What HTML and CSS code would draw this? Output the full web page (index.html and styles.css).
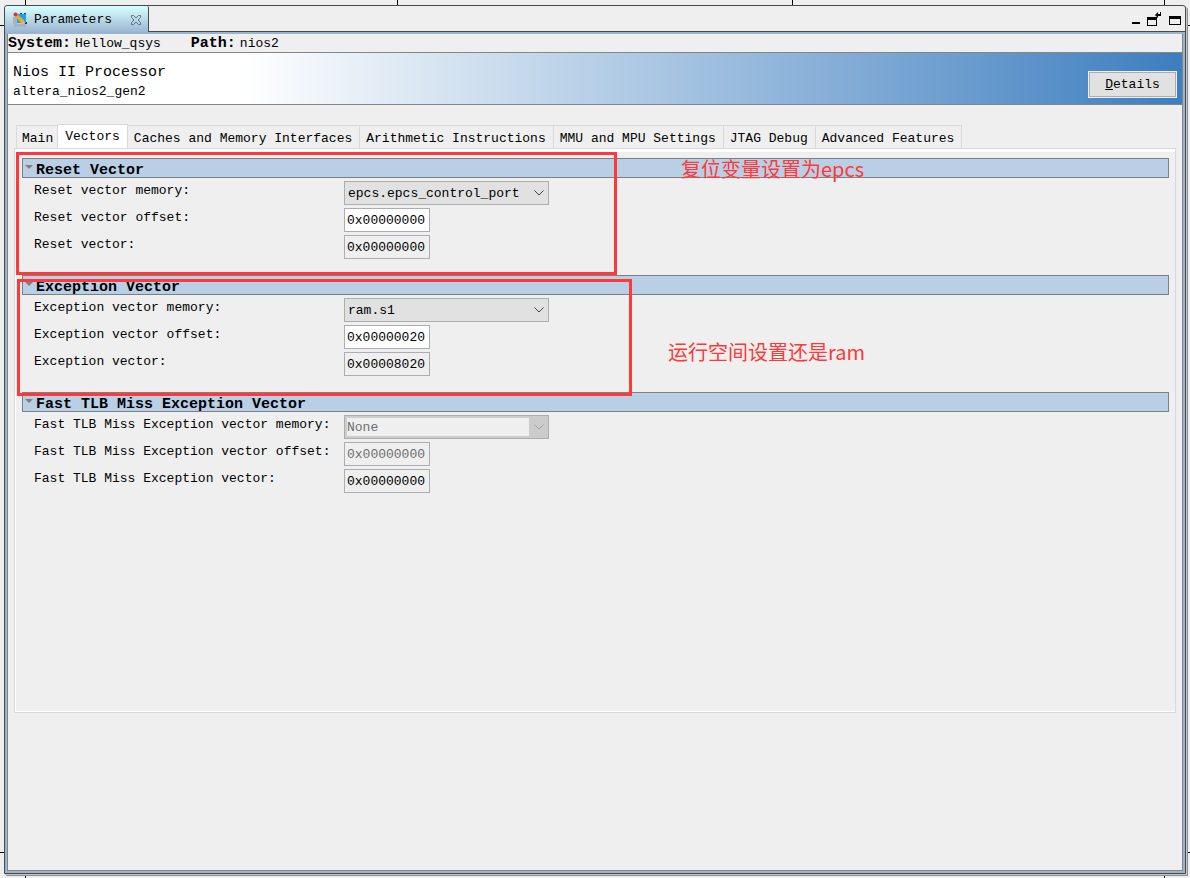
FILE: index.html
```html
<!DOCTYPE html>
<html lang="en">
<head>
<meta charset="utf-8">
<title>Parameters</title>
<link rel="stylesheet" href="styles.css">
</head>
<body>
<div class="desktop">
  <span class="tick tick-v tick-a"></span><span class="tick tick-v tick-b"></span><span class="tick tick-v tick-c"></span><span class="tick tick-v tick-d"></span>
  <span class="tick tick-v tick-e"></span><span class="tick tick-v tick-f"></span>
  <span class="tick tick-h tick-g"></span><span class="tick tick-h tick-i"></span><span class="tick tick-h tick-j"></span><span class="tick tick-h tick-k"></span>
  <main class="window">
    <header class="titlebar">
      <div class="title-tab">
        <svg class="icon-app" width="16" height="16" viewBox="0 0 16 16" aria-hidden="true"><path fill="#a9b3ba" d="M2 12h12v3H2zM1 5h4v7H1z"/><path fill="#12a5f4" d="M5 2h9v9H5z"/><path fill="#1f3550" d="M8 1h2v1H8zM12 1h2v1h-2zM14 10h1v2h-3v-1h2z"/><path fill="#f5a623" d="M3 4l2-2 7 6 1 4-4-1z"/><path fill="#e8b98a" d="M9 11l3-2 1 3z"/><circle cx="3.500" cy="2.500" r="2" fill="#ee2b3a"/></svg>
        <span class="title-text">Parameters</span>
        <button class="icon-btn" type="button" aria-label="Close Parameters"><svg width="12" height="12" viewBox="0 0 12 12"><path fill="none" stroke="#5f7378" d="M1.5 1.5h2l2.500 2.500 2.500-2.500h2v2L8 6l2.500 2.500v2h-2L6 8l-2.500 2.500h-2v-2L4 6 1.500 3.500z"/></svg></button>
      </div>
      <div class="window-buttons">
        <button class="icon-btn" type="button" aria-label="Minimize"><svg width="8" height="15" viewBox="0 0 8 15"><path d="M0 10h8v2H0z"/></svg></button>
        <button class="icon-btn" type="button" aria-label="Restore"><svg width="15" height="15" viewBox="0 0 15 15"><path fill-rule="evenodd" d="M0 5h10v9H0zM1 8v5h8V8z"/><path d="M8 3l3-3v2h2V0h1v4h-3v2z"/></svg></button>
        <button class="icon-btn" type="button" aria-label="Maximize"><svg width="12" height="15" viewBox="0 0 12 15"><path fill-rule="evenodd" d="M0 4h12v9H0zM1 7v5h10V7z"/></svg></button>
      </div>
    </header>
    <div class="frame">
      <div class="content">
        <div class="location"><b>System:</b><span class="system">Hellow_qsys</span><b>Path:</b><span>nios2</span></div>
        <div class="banner">
          <div><h1 class="name">Nios II Processor</h1><div class="kind">altera_nios2_gen2</div></div>
          <button class="details" type="button"><u>D</u>etails</button>
        </div>
        <div class="workspace">
          <div class="tabs" role="tablist">
            <button class="tab" role="tab" type="button">Main</button><button class="tab tab-active" role="tab" type="button" aria-selected="true">Vectors</button><button class="tab" role="tab" type="button">Caches and Memory Interfaces</button><button class="tab" role="tab" type="button">Arithmetic Instructions</button><button class="tab" role="tab" type="button">MMU and MPU Settings</button><button class="tab" role="tab" type="button">JTAG Debug</button><button class="tab" role="tab" type="button">Advanced Features</button>
          </div>
          <div class="pane" role="tabpanel">
            <section class="group">
              <h2 class="bar">Reset Vector</h2>
              <div class="row"><label for="rm">Reset vector memory:</label><span class="combo"><select id="rm"><option>epcs.epcs_control_port</option></select><svg class="chevron" width="10" height="6" viewBox="0 0 10 6"><path d="M.5.500 5 5 9.500.500"/></svg></span></div>
              <div class="row"><label for="ro">Reset vector offset:</label><input id="ro" value="0x00000000"></div>
              <div class="row"><label for="rv">Reset vector:</label><input id="rv" value="0x00000000" readonly></div>
            </section>
            <section class="group">
              <h2 class="bar">Exception Vector</h2>
              <div class="row"><label for="em">Exception vector memory:</label><span class="combo"><select id="em"><option>ram.s1</option></select><svg class="chevron" width="10" height="6" viewBox="0 0 10 6"><path d="M.5.500 5 5 9.500.500"/></svg></span></div>
              <div class="row"><label for="eo">Exception vector offset:</label><input id="eo" value="0x00000020"></div>
              <div class="row"><label for="ev">Exception vector:</label><input id="ev" value="0x00008020" readonly></div>
            </section>
            <section class="group">
              <h2 class="bar">Fast TLB Miss Exception Vector</h2>
              <div class="row"><label for="fm">Fast TLB Miss Exception vector memory:</label><span class="combo combo-off"><select id="fm" disabled><option>None</option></select><svg class="chevron" width="10" height="6" viewBox="0 0 10 6"><path d="M.5.500 5 5 9.500.500"/></svg></span></div>
              <div class="row"><label for="fo">Fast TLB Miss Exception vector offset:</label><input id="fo" value="0x00000000" disabled></div>
              <div class="row"><label for="fv">Fast TLB Miss Exception vector:</label><input id="fv" value="0x00000000" readonly></div>
            </section>
            <div class="mark mark-reset"></div>
            <div class="mark mark-exception"></div>
            <div class="note note-reset" lang="zh">复位变量设置为epcs</div>
            <div class="note note-exception" lang="zh">运行空间设置还是ram</div>
          </div>
        </div>
      </div>
    </div>
  </main>
</div>
</body>
</html>
```
FILE: styles.css
```css
* { box-sizing: border-box; }
body { margin: 0; background: #efefef; color: #000; font: 13px/16px "Liberation Mono", monospace; }
button, input, select { font: inherit; color: inherit; margin: 0; border-radius: 0; }
h1, h2 { margin: 0; font-size: 15px; }

.desktop { position: relative; display: flex; min-height: 100vh; padding: 5px 4px 4px; }
.tick { position: absolute; background: #000; }
.tick-v { width: 1px; height: 5px; }
.tick-h { width: 5px; height: 1px; }
.tick-a, .tick-b, .tick-c, .tick-d { top: 0; }
.tick-a, .tick-e { left: 25px; }
.tick-b { left: 397px; }
.tick-c { left: 792px; }
.tick-d, .tick-f { right: 25px; }
.tick-e, .tick-f { bottom: 0; }
.tick-g, .tick-j { left: 0; }
.tick-i, .tick-k { right: 0; }
.tick-g, .tick-i { top: 25px; }
.tick-j, .tick-k { bottom: 25px; }

/* Window shell */
.window { position: relative; flex: 1; display: flex; flex-direction: column; border: 1px solid #47494b; border-radius: 3px 3px 0 0; box-shadow: 1px 1px #c6c6c0, 2px 2px #8f8f8b; background: #efefef; }
.titlebar { display: flex; justify-content: space-between; height: 26px; border-bottom: 1px solid #47494b; }
.title-tab { display: flex; align-items: center; width: 144px; height: 27px; padding: 0 6px 0 7px; border-right: 1px solid #47494b; background: linear-gradient(#d8ffff, #99b4d1); border-radius: 3px 2px 0 0; }
.title-text { flex: 1; padding-left: 6px; }
.icon-btn { display: flex; padding: 0; border: 0; background: none; }
.window-buttons { display: flex; align-items: center; gap: 7px; padding: 1px 4px 0 0; }
.frame { flex: 1; display: flex; padding: 2px; background: #99b4d1; }
.content { flex: 1; display: flex; flex-direction: column; border: 1px solid #858585; border-top: 0; background: #efefef; }

.location { display: flex; align-items: center; gap: 4px; height: 19px; padding-top: 2px; border-bottom: 1px solid #858585; }
.location b { font-size: 15px; }
.system { margin-right: 26px; }
.banner { display: flex; align-items: center; justify-content: space-between; min-height: 52px; padding: 6px 5px 0; border-bottom: 1px solid #858585; background: linear-gradient(to right, #fff 20%, #3d7ebf); }
.name { font-weight: 400; line-height: 20px; }
.kind { line-height: 18px; }
.details { width: 89px; height: 27px; margin-top: 6px; padding: 0; border: 1px solid #efefef; outline: 1px solid #adadad; outline-offset: -2px; background: #e1e1e1; }

/* Tabs */
.workspace { padding: 19px 6px 0; }
.tabs { display: flex; align-items: flex-end; padding-left: 2px; }
.tab { height: 23px; padding: 4px 7px 0 6px; border: 1px solid #d9d9d9; border-width: 1px 1px 0 0; background: #efefef; white-space: nowrap; }
.tab:first-child { padding: 4px 4px 0 5px; border-left-width: 1px; }
.tab-active { position: relative; height: 25px; margin-bottom: -1px; padding: 0 7px; background: #fff; }
.pane { position: relative; min-height: 565px; padding: 6px 6px 0 7px; border: 1px solid #d9d9d9; box-shadow: inset 0 3px #fff, inset 1px -1px #fff; }

/* Parameter groups */
.group { padding: 3px 0 10px; }
.bar { display: flex; align-items: center; height: 20px; margin-bottom: 3px; padding: 6px 0 0 2px; gap: 3px; border: 1px solid #7f7f7f; background: #b8cfe5; line-height: 16px; }
.bar::before { content: ""; align-self: flex-start; border: 4px solid transparent; border-top-color: #7f7f7f; border-bottom: 0; }
.row { display: grid; grid-template-columns: 310px 1fr; height: 24px; padding-left: 12px; margin-bottom: 3px; }
.row label { padding-top: 2px; white-space: nowrap; }
.row input { width: 86px; height: 24px; padding: 1px 2px 0; border: 1px solid #abadb3; background: #fff; }
.row input:read-only { background: #efefef; }
.row input:disabled, .row select:disabled { color: #6d6d6d; opacity: 1; }
.combo { position: relative; width: 205px; }
.combo select { appearance: none; width: 100%; height: 24px; padding: 2px 20px 0 3px; border: 1px solid #adadad; background: #e1e1e1; }
.combo-off select { padding-left: 2px; background: linear-gradient(#efefef, #efefef) 2px 2px / 182px 18px no-repeat #ccc; }
.chevron { position: absolute; right: 5px; top: 9px; fill: none; stroke: #444; pointer-events: none; }
.combo-off .chevron { stroke: #a0a0a0; }

/* Annotations drawn over the form */
.mark { position: absolute; border: 3px solid #ff3838; pointer-events: none; }
.mark-reset { left: 1px; top: 3px; width: 601px; height: 123px; }
.mark-exception { left: 2px; top: 130px; width: 615px; height: 117px; }
.note { position: absolute; color: #ff3838; font: 20px/28px "Noto Sans CJK SC", "Noto Sans", sans-serif; white-space: nowrap; }
.note-reset { left: 666px; top: 6px; }
.note-exception { left: 653px; top: 189px; }
```
